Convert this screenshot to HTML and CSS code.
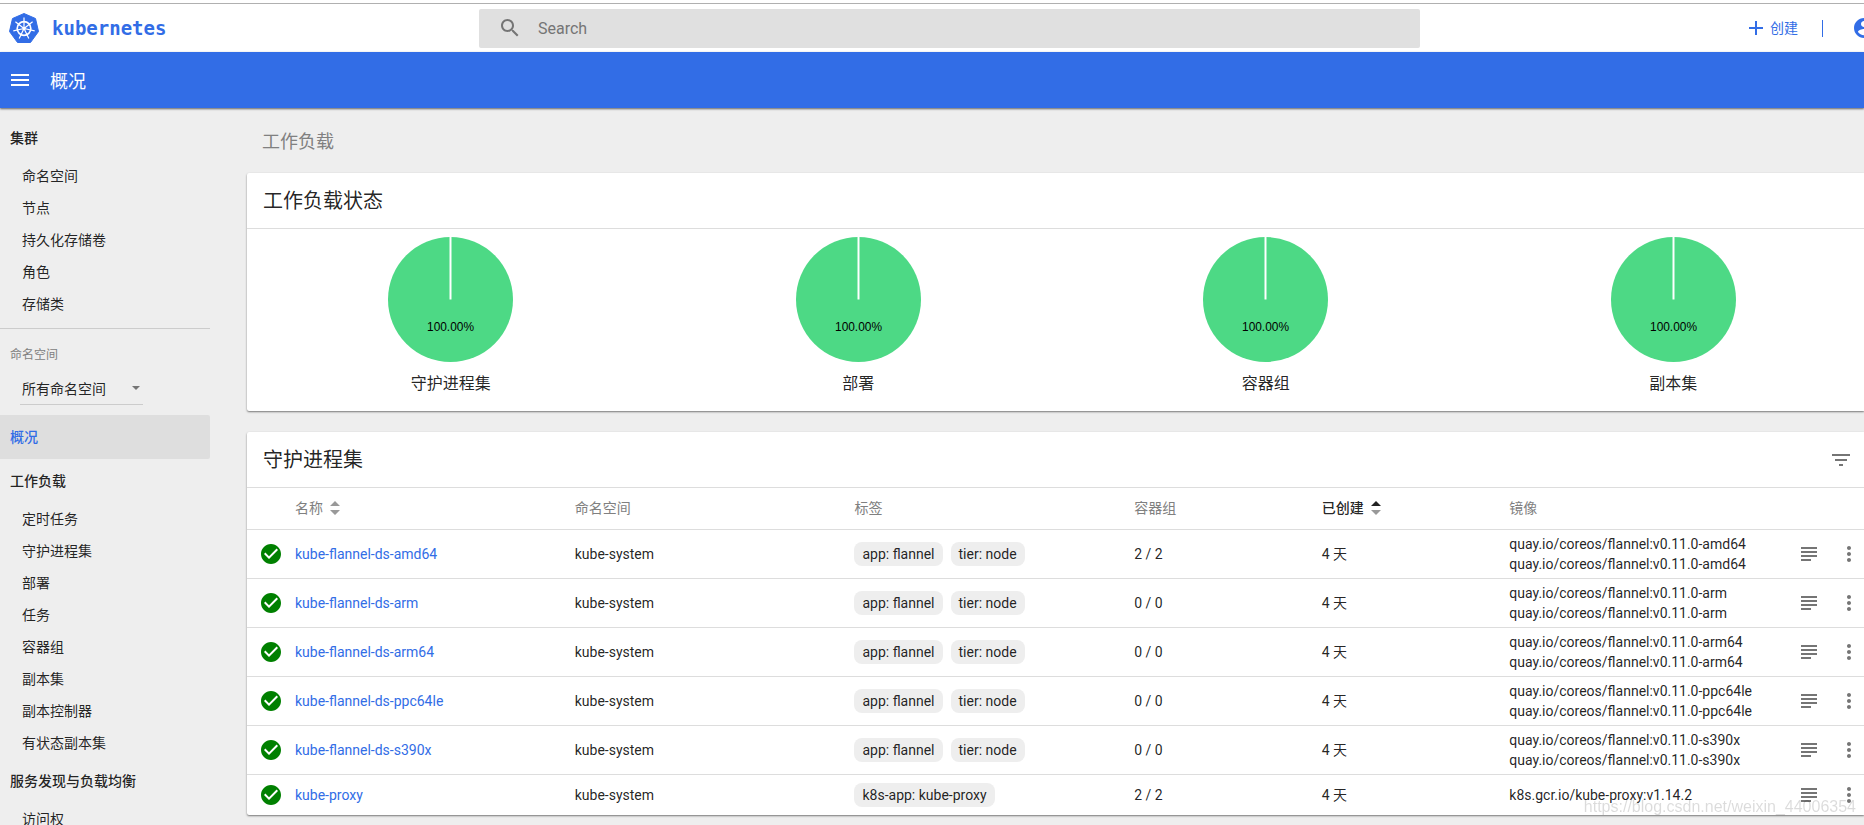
FILE: index.html
```html
<!DOCTYPE html>
<html lang="zh-CN">
<head>
<meta charset="utf-8">
<title>Kubernetes Dashboard</title>
<link rel="stylesheet" href="styles.css">
</head>
<body>
<svg class="defs" aria-hidden="true">
  <symbol id="check" viewBox="0 0 24 24"><path d="M12 2C6.480 2 2 6.480 2 12s4.480 10 10 10 10-4.480 10-10S17.520 2 12 2zm-2 15l-5-5 1.410-1.410L10 14.170l7.590-7.590L19 8l-9 9z"/></symbol>
  <symbol id="subject" viewBox="0 0 24 24"><path d="M14 17H4v2h10v-2zm6-8H4v2h16V9zM4 15h16v-2H4v2zM4 5v2h16V5H4z"/></symbol>
  <symbol id="more" viewBox="0 0 24 24"><path d="M12 8c1.100 0 2-.9 2-2s-.9-2-2-2-2 .9-2 2 .9 2 2 2zm0 2c-1.100 0-2 .9-2 2s.9 2 2 2 2-.9 2-2-.9-2-2-2zm0 6c-1.100 0-2 .9-2 2s.9 2 2 2 2-.9 2-2-.9-2-2-2z"/></symbol>
</svg>
<header class="header">
  <a class="brand" href="#">
    <svg class="logo" viewBox="0 0 30 30" aria-hidden="true">
      <path fill="#326de6" d="M15 0.500L26.500 5.500 29.500 18.500 21.500 29.500H8.500L0.500 18.500 3.500 5.500z" stroke="#326de6" stroke-linejoin="round"/>
      <g stroke="#fff" fill="none">
        <circle cx="15" cy="15.500" r="6.800" stroke-width="1.700"/>
        <path stroke-width="1.200" d="M15 15.500V4.500M15 15.500L23.600 8.700M15 15.500L25.700 17.900M15 15.500L19.800 25.400M15 15.500L10.200 25.400M15 15.500L4.300 17.900M15 15.500L6.400 8.700"/>
      </g>
      <circle cx="15" cy="15.500" r="1.500" fill="#fff"/>
    </svg>
    <span>kubernetes</span>
  </a>
  <label class="search">
    <svg class="icon" viewBox="0 0 24 24" aria-hidden="true"><path d="M15.500 14h-.79l-.28-.27C15.410 12.590 16 11.110 16 9.500 16 5.910 13.090 3 9.500 3S3 5.910 3 9.500 5.910 16 9.500 16c1.610 0 3.090-.59 4.230-1.570l.27.28v.79l5 4.990L20.490 19l-4.990-5zm-6 0C7.010 14 5 11.990 5 9.500S7.010 5 9.500 5 14 7.010 14 9.500 11.990 14 9.500 14z"/></svg>
    <input type="text" placeholder="Search" aria-label="Search">
  </label>
  <div class="actions">
    <button class="create" type="button"><svg class="icon" viewBox="0 0 24 24" aria-hidden="true"><path d="M19 13h-6v6h-2v-6H5v-2h6V5h2v6h6v2z"/></svg>创建</button>
    <span class="divider"></span>
    <button class="account" type="button" aria-label="Account"><svg class="icon" viewBox="0 0 24 24" aria-hidden="true"><path d="M12 2C6.480 2 2 6.480 2 12s4.480 10 10 10 10-4.480 10-10S17.520 2 12 2zm0 3c1.660 0 3 1.340 3 3s-1.340 3-3 3-3-1.340-3-3 1.340-3 3-3zm0 14.200c-2.500 0-4.710-1.280-6-3.220.03-1.990 4-3.080 6-3.080 1.990 0 5.970 1.090 6 3.080-1.290 1.940-3.500 3.220-6 3.220z"/></svg></button>
  </div>
</header>
<div class="toolbar">
  <button class="menu" type="button" aria-label="Menu"><svg class="icon" viewBox="0 0 24 24" aria-hidden="true"><path d="M3 18h18v-2H3v2zm0-5h18v-2H3v2zm0-7v2h18V6H3z"/></svg></button>
  <h1>概况</h1>
</div>
<div class="body">
  <nav class="nav">
    <a class="group" href="#">集群</a>
    <a class="item" href="#">命名空间</a>
    <a class="item" href="#">节点</a>
    <a class="item" href="#">持久化存储卷</a>
    <a class="item" href="#">角色</a>
    <a class="item" href="#">存储类</a>
    <div class="namespace">
      <label for="ns">命名空间</label>
      <div class="select">
        <select id="ns"><option>所有命名空间</option></select>
      </div>
    </div>
    <a class="group active" href="#">概况</a>
    <a class="group" href="#">工作负载</a>
    <a class="item" href="#">定时任务</a>
    <a class="item" href="#">守护进程集</a>
    <a class="item" href="#">部署</a>
    <a class="item" href="#">任务</a>
    <a class="item" href="#">容器组</a>
    <a class="item" href="#">副本集</a>
    <a class="item" href="#">副本控制器</a>
    <a class="item" href="#">有状态副本集</a>
    <a class="group" href="#">服务发现与负载均衡</a>
    <a class="item" href="#">访问权</a>
  </nav>
  <main class="main">
    <h2>工作负载</h2>
    <section class="card">
      <div class="card-head"><h3>工作负载状态</h3></div>
      <div class="charts">
        <figure><svg viewBox="0 0 126 126" role="img" aria-label="100.00%"><circle cx="63" cy="63" r="63"/><path d="M63 0V63"/><text x="63" y="95">100.00%</text></svg><figcaption>守护进程集</figcaption></figure>
        <figure><svg viewBox="0 0 126 126" role="img" aria-label="100.00%"><circle cx="63" cy="63" r="63"/><path d="M63 0V63"/><text x="63" y="95">100.00%</text></svg><figcaption>部署</figcaption></figure>
        <figure><svg viewBox="0 0 126 126" role="img" aria-label="100.00%"><circle cx="63" cy="63" r="63"/><path d="M63 0V63"/><text x="63" y="95">100.00%</text></svg><figcaption>容器组</figcaption></figure>
        <figure><svg viewBox="0 0 126 126" role="img" aria-label="100.00%"><circle cx="63" cy="63" r="63"/><path d="M63 0V63"/><text x="63" y="95">100.00%</text></svg><figcaption>副本集</figcaption></figure>
      </div>
    </section>
    <section class="card">
      <div class="card-head"><h3>守护进程集</h3><button class="filter" type="button" aria-label="Filter"><svg class="icon" viewBox="0 0 24 24" aria-hidden="true"><path d="M10 18h4v-2h-4v2zM3 6v2h18V6H3zm3 7h12v-2H6v2z"/></svg></button></div>
      <table>
        <colgroup><col class="c-status"><col class="c-wide"><col class="c-wide"><col class="c-wide"><col class="c-mid"><col class="c-mid"><col><col class="c-log"><col class="c-more"></colgroup>
        <thead><tr><th></th>
          <th>名称<svg class="sort" viewBox="0 0 10 14" aria-hidden="true"><path d="M0 5L5 0 10 5zM0 9L5 14 10 9z"/></svg></th>
          <th>命名空间</th><th>标签</th><th>容器组</th>
          <th class="sorted">已创建<svg class="sort" viewBox="0 0 10 14" aria-hidden="true"><path class="up" d="M0 5L5 0 10 5z"/><path d="M0 9L5 14 10 9z"/></svg></th>
          <th>镜像</th><th></th><th></th></tr></thead>
        <tbody id="rows"></tbody>
      </table>
    </section>
  </main>
</div>
<div class="watermark">https://blog.csdn.net/weixin_44006354</div>
<script src="rows.js"></script>
</body>
</html>
```
FILE: rows.js
```js
const flannel = arch => ({
  name: `kube-flannel-ds-${arch}`,
  labels: ['app: flannel', 'tier: node'],
  pods: arch === 'amd64' ? '2 / 2' : '0 / 0',
  images: Array(2).fill(`quay.io/coreos/flannel:v0.11.0-${arch}`)
});
const sets = [
  ...['amd64', 'arm', 'arm64', 'ppc64le', 's390x'].map(flannel),
  { name: 'kube-proxy', labels: ['k8s-app: kube-proxy'], pods: '2 / 2', images: ['k8s.gcr.io/kube-proxy:v1.14.2'] }
];
const icon = (id, cls = '') => `<svg class="icon ${cls}" aria-hidden="true"><use href="#${id}"/></svg>`;
document.getElementById('rows').innerHTML = sets.map(s => `<tr>
  <td>${icon('check', 'ok')}</td>
  <td><a href="#">${s.name}</a></td>
  <td>kube-system</td>
  <td><div class="chips">${s.labels.map(l => `<span class="chip">${l}</span>`).join('')}</div></td>
  <td>${s.pods}</td>
  <td>4 天</td>
  <td>${s.images.map(i => `<div>${i}</div>`).join('')}</td>
  <td><button type="button" aria-label="Logs">${icon('subject')}</button></td>
  <td><button type="button" aria-label="Actions">${icon('more')}</button></td>
</tr>`).join('');
```
FILE: styles.css
```css
* { box-sizing: border-box; }
html { overflow: hidden; }
body {
  margin: 0;
  height: 100vh;
  overflow: hidden;
  background: #eee;
  color: rgba(0, 0, 0, 0.87);
  font: 14px/20px Roboto, "Noto Sans CJK SC", sans-serif;
}
a { color: #326de6; text-decoration: none; }
button { display: flex; padding: 0; border: 0; background: none; color: inherit; font: inherit; }
h1, h2, h3, figure { margin: 0; font-weight: 400; }
.defs { position: absolute; width: 0; height: 0; }
.icon { display: block; flex: none; width: 24px; height: 24px; fill: currentColor; }

.header {
  display: flex;
  align-items: center;
  height: 52px;
  padding-top: 4px;
  background: linear-gradient(#fff 3px, #b0b0b0 3px, #b0b0b0 4px, #fff 4px);
}
.brand {
  display: flex;
  align-items: center;
  gap: 13px;
  width: 479px;
  padding-left: 9px;
  font: 700 19px/28px "DejaVu Sans Mono", monospace;
}
.logo { width: 30px; height: 30px; }
.search {
  display: flex;
  align-items: center;
  flex: 1;
  gap: 16px;
  height: 39px;
  padding-left: 19px;
  border-radius: 2px;
  background: #e0e0e0;
  color: #757575;
}
.search input { flex: 1; padding: 2px 0 0; border: 0; outline: 0; background: none; font: 16px/24px Roboto, sans-serif; }
.search input::placeholder { color: #757575; opacity: 1; }
.actions { display: flex; align-items: center; justify-content: flex-end; width: 444px; color: #326de6; }
.create { align-items: center; gap: 2px; }
.divider { width: 1px; height: 17px; margin: 0 29px 0 24px; background: #326de6; }
.account { width: 12px; overflow: hidden; }

.toolbar {
  position: relative;
  display: flex;
  align-items: center;
  gap: 18px;
  height: 56px;
  padding-left: 8px;
  background: #326de6;
  color: #fff;
  box-shadow: 0 1px 2px rgba(0, 0, 0, 0.6);
}
.toolbar h1 { padding-top: 3px; font-size: 18px; line-height: 24px; }

.body { display: flex; }
.nav { flex: none; width: 210px; padding-top: 8px; }
.nav a { display: block; color: rgba(0, 0, 0, 0.87); }
.nav .group { padding: 12px 10px; font-weight: 500; }
.nav .item { padding: 6px 22px; }
.nav .active { border-radius: 0 2px 2px 0; background: #dedede; color: #326de6; }
.namespace { margin-top: 8px; padding: 16px 10px 10px; border-top: 1px solid #ccc; }
.namespace label { display: block; color: #808080; font-size: 12px; }
.select { position: relative; width: 123px; margin: 9px 0 0 10px; border-bottom: 1px solid #ccc; }
.select::after {
  content: "";
  position: absolute;
  top: 12px;
  right: 3px;
  border: 4px solid transparent;
  border-top-color: #757575;
  border-bottom: 0;
}
.select select {
  appearance: none;
  width: 100%;
  height: 30px;
  padding: 0 2px;
  border: 0;
  background: none;
  color: inherit;
  font: inherit;
}

.main { flex: 1; min-width: 0; padding-left: 37px; }
.main h2 { padding: 22px 15px 19px; color: #808080; font-size: 18px; line-height: 24px; }
.card {
  margin-bottom: 21px;
  border-radius: 2px 0 0 2px;
  background: #fff;
  box-shadow: 0 1px 2px rgba(0, 0, 0, 0.5);
}
.card-head {
  display: flex;
  align-items: center;
  justify-content: space-between;
  height: 56px;
  padding: 0 11px 0 16px;
  border-bottom: 1px solid #ddd;
}
.card-head h3 { font-size: 20px; line-height: 28px; }
.filter, td button { color: #757575; }
.charts { display: grid; grid-template-columns: repeat(4, 1fr); padding: 8px 0 14px; margin-right: -13px; }
.charts figure { display: flex; flex-direction: column; align-items: center; gap: 9px; }
.charts svg { width: 125px; height: 125px; }
.charts circle { fill: #4dd985; }
.charts path { stroke: #fff; stroke-width: 2; }
.charts text { font: 12px "Liberation Sans", sans-serif; text-anchor: middle; }
.charts figcaption { font-size: 16px; line-height: 26px; }

table { width: 100%; border-collapse: collapse; table-layout: fixed; }
th, td { padding: 4px 0; text-align: left; font-weight: 400; }
th { height: 41px; color: #808080; }
td { height: 41px; border-top: 1px solid #ddd; }
.c-status { width: 48px; }
.c-wide { width: 17.300%; }
.c-mid { width: 11.600%; }
.c-log { width: 40px; }
.c-more { width: 27px; }
.sorted { color: rgba(0, 0, 0, 0.87); font-weight: 500; }
.sort { width: 10px; height: 14px; margin-left: 7px; vertical-align: -2px; fill: #999; }
.sort .up { fill: #222; }
.ok { margin-left: 12px; color: green; }
.chips { display: flex; gap: 8px; }
.chip { padding: 2px 8px; border-radius: 8px; background: #eee; }
.watermark {
  position: fixed;
  right: 8px;
  bottom: 8px;
  color: rgba(0, 0, 0, 0.14);
  font: 16px/20px "Liberation Sans", sans-serif;
}
```
